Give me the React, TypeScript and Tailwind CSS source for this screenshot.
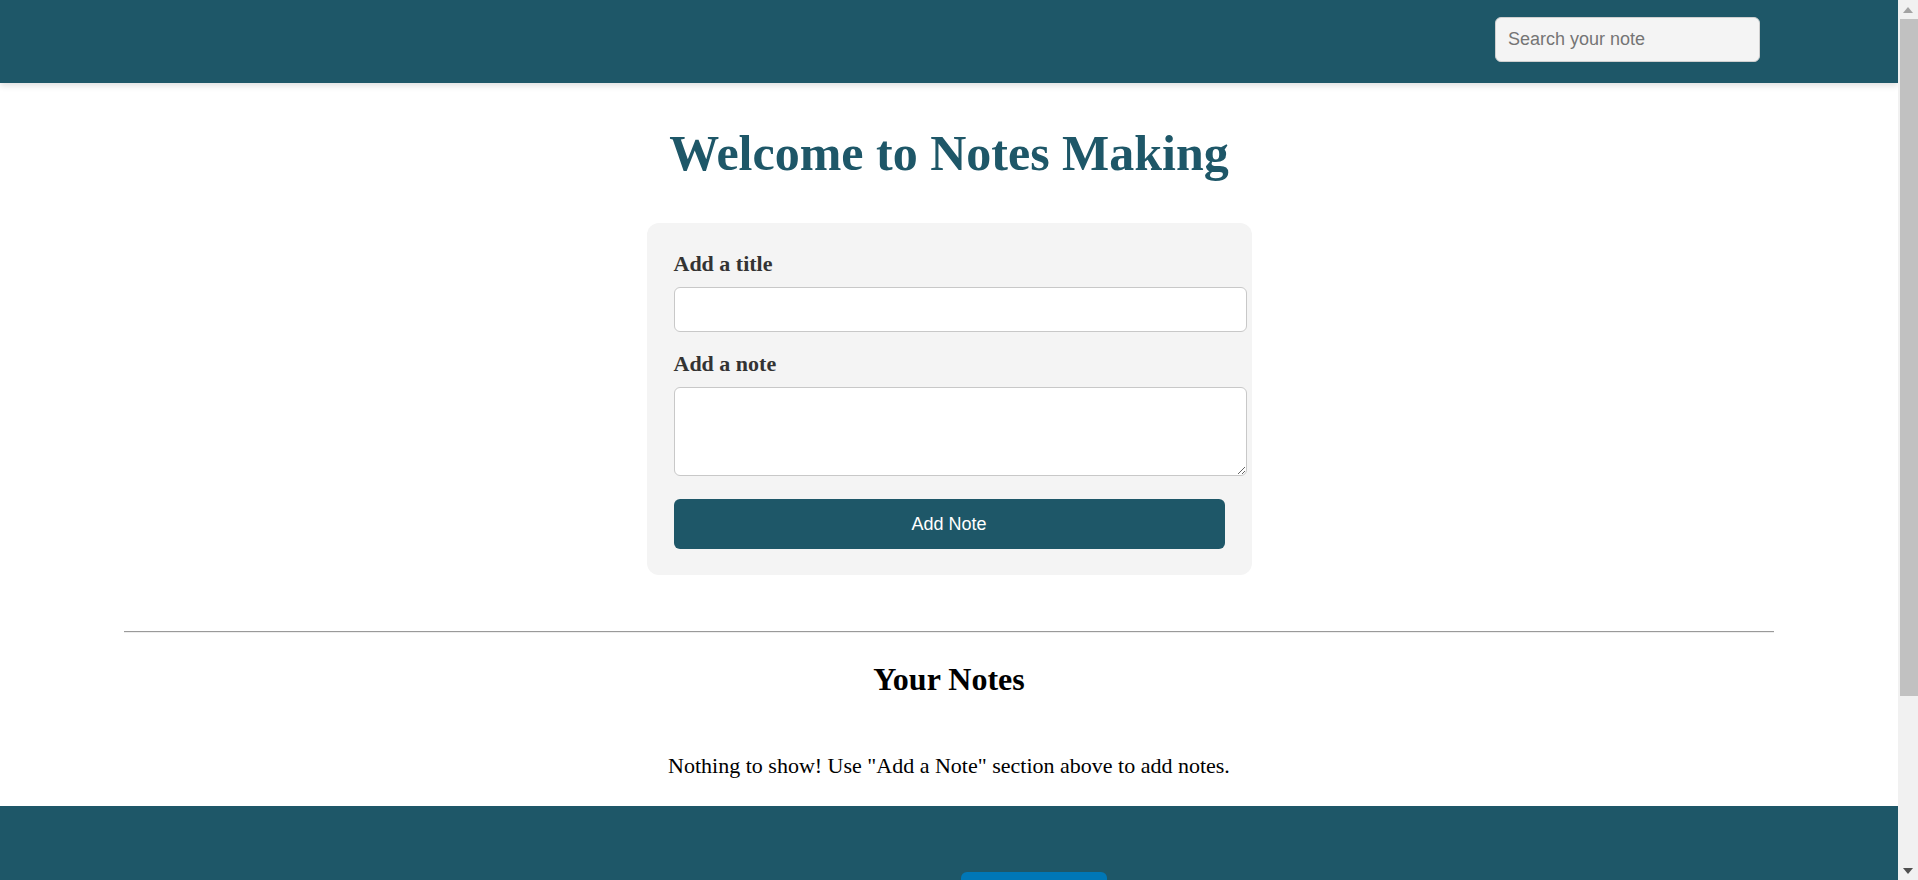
function FakeScrollbar() {
  return (
    <div className="fixed top-0 right-0 z-20 flex h-[880px] w-[20px] flex-col bg-[#f1f1f1]">
      <div className="flex h-[19px] items-center justify-center">
        <svg width="10" height="6" viewBox="0 0 10 6">
          <path d="M0 6 L5 0 L10 6 Z" fill="#a3a3a3" />
        </svg>
      </div>
      <div className="ml-[2px] h-[677px] bg-[#c1c1c1]" />
      <div className="flex-1" />
      <div className="flex h-[19px] items-center justify-center">
        <svg width="10" height="6" viewBox="0 0 10 6">
          <path d="M0 0 L10 0 L5 6 Z" fill="#505050" />
        </svg>
      </div>
    </div>
  )
}

export default function App() {
  return (
    <div className="min-h-screen bg-white font-['Liberation_Serif',serif] text-black">
      <FakeScrollbar />
      <div className="w-[1898px]">
        <header className="relative z-10 flex h-[83px] items-start justify-end bg-[#1e5768] pt-[17px] pr-[138px] shadow-[0_3px_6px_rgba(0,0,0,0.12)]">
          <input
            type="text"
            placeholder="Search your note"
            className="h-[45px] w-[265px] rounded-md border border-[#cfcfcf] bg-[#f4f4f4] px-3 font-['Liberation_Sans',sans-serif] text-[18px] text-[#333] placeholder:text-[#757575] outline-none"
          />
        </header>

        <main className="flex flex-col items-center">
          <h1 className="mt-[41px] text-[50px] leading-[59px] font-bold text-[#1e5768]">
            Welcome to Notes Making
          </h1>

          <form className="mt-[40px] flex w-[605px] flex-col rounded-xl bg-[#f4f4f4] pt-[28px] pr-[5px] pb-[26px] pl-[27px]">
            <label className="text-[22px] leading-[25px] font-bold text-[#333]">Add a title</label>
            <input
              type="text"
              className="mt-[11px] h-[45px] w-[573px] rounded-md border border-[#c8c8c8] bg-white px-[10px] font-['Liberation_Sans',sans-serif] text-[18px] outline-none"
            />
            <label className="mt-[19px] text-[22px] leading-[25px] font-bold text-[#333]">Add a note</label>
            <textarea className="mt-[11px] h-[89px] w-[573px] rounded-md border border-[#c8c8c8] bg-white px-[10px] py-[8px] font-['Liberation_Sans',sans-serif] text-[18px] outline-none" />
            <button
              type="button"
              className="mt-[23px] h-[50px] w-[551px] rounded-md bg-[#1e5768] font-['Liberation_Sans',sans-serif] text-[18px] text-white"
            >
              Add Note
            </button>
          </form>
        </main>

        <hr className="mx-[124px] mt-[56px] border-t border-b border-t-[#9a9a9a] border-b-[#eeeeee]" />

        <section className="flex flex-col items-center">
          <h2 className="mt-[28px] text-[32px] leading-[37px] font-bold">Your Notes</h2>
          <p className="mt-[55px] text-[22px] leading-[25px]">
            Nothing to show! Use "Add a Note" section above to add notes.
          </p>
        </section>

        <footer className="mt-[28px] flex h-[287px] justify-center bg-[#1e5768] pt-[66px]">
          <div className="ml-[170px] h-[52px] w-[146px] rounded-md bg-[#0077b6]" />
        </footer>
      </div>
    </div>
  )
}
